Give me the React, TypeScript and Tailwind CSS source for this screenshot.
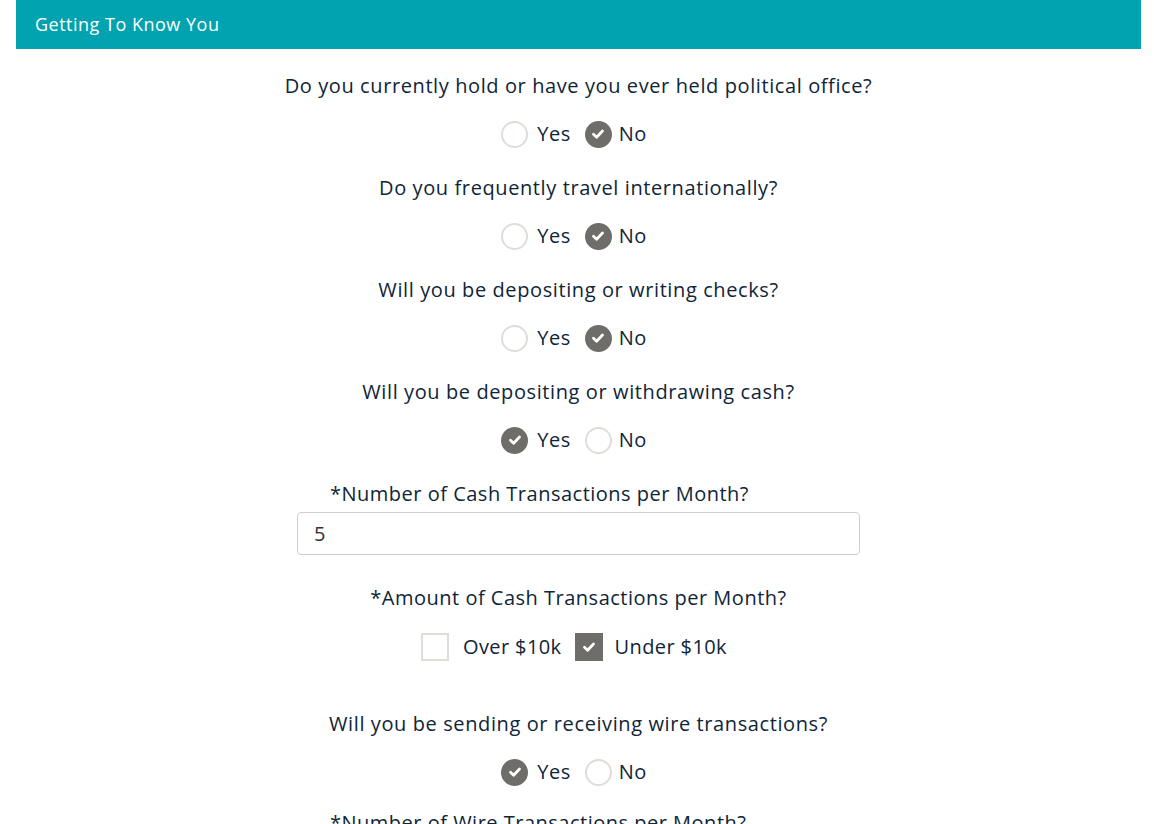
import React from "react";

const font = { fontFamily: '"Open Sans", "Noto Sans", sans-serif' };

function Check() {
  return (
    <svg width="16" height="16" viewBox="0 0 16 16" fill="none">
      <path d="M3.5 8.3 L6.6 11.2 L12.5 5" stroke="white" strokeWidth="2.8" strokeLinecap="round" strokeLinejoin="round" />
    </svg>
  );
}

function Radio({ checked }: { checked: boolean }) {
  return checked ? (
    <span className="flex h-[27px] w-[27px] items-center justify-center rounded-full bg-[#6f6d69]">
      <Check />
    </span>
  ) : (
    <span className="block h-[27px] w-[27px] rounded-full border-2 border-[#e0ddd8] bg-white" />
  );
}

function Box({ checked }: { checked: boolean }) {
  return checked ? (
    <span className="flex h-[28px] w-[28px] items-center justify-center bg-[#6f6d69]">
      <Check />
    </span>
  ) : (
    <span className="block h-[28px] w-[28px] border-2 border-[#e0ddd8] bg-white" />
  );
}

function YesNo({ yes }: { yes: boolean }) {
  return (
    <div className="flex h-[26px] items-center justify-center pr-[9px] text-[20px] tracking-[0.5px] text-[#0f2538]">
      <Radio checked={yes} />
      <span className="ml-[9px] mr-[14px]">Yes</span>
      <Radio checked={!yes} />
      <span className="ml-[7px]">No</span>
    </div>
  );
}

function Question({ text, yes }: { text: string; yes: boolean }) {
  return (
    <div className="flex flex-col">
      <div className="h-[24px] text-center text-[20px] font-medium leading-[24px] tracking-[0.6px] text-[#0f2538]">
        {text}
      </div>
      <div className="mt-[23px]">
        <YesNo yes={yes} />
      </div>
    </div>
  );
}

function NumberField({ label, value }: { label: string; value: string }) {
  return (
    <div className="mx-auto flex w-[563px] flex-col">
      <div className="h-[24px] pl-[33px] text-[20px] leading-[24px] tracking-[0.5px] text-[#0f2538]">{label}</div>
      <input
        readOnly
        value={value}
        className="mt-[6px] h-[43px] w-full rounded-[4px] border border-[#cfcfcf] px-[16px] text-[20px] text-[#333] outline-none"
        style={font}
      />
    </div>
  );
}

export default function App() {
  return (
    <div className="h-[824px] w-full overflow-hidden bg-white" style={font}>
      <div className="ml-4 mr-[13px] flex flex-col">
        <div className="flex h-[49px] items-center bg-[#00a3af] pl-[19px] text-[18px] font-medium tracking-[0.5px] text-white">
          Getting To Know You
        </div>
        <div className="flex flex-col pt-[25px]">
          <Question text="Do you currently hold or have you ever held political office?" yes={false} />
          <div className="mt-[29px]">
            <Question text="Do you frequently travel internationally?" yes={false} />
          </div>
          <div className="mt-[29px]">
            <Question text="Will you be depositing or writing checks?" yes={false} />
          </div>
          <div className="mt-[29px]">
            <Question text="Will you be depositing or withdrawing cash?" yes={true} />
          </div>
          <div className="mt-[29px]">
            <NumberField label="*Number of Cash Transactions per Month?" value="5" />
          </div>
          <div className="mt-[31px] h-[24px] text-center text-[20px] leading-[24px] tracking-[0.5px] text-[#0f2538]">
            *Amount of Cash Transactions per Month?
          </div>
          <div className="mt-[23px] flex h-[28px] items-center justify-center pr-[9px] text-[20px] tracking-[0.4px] text-[#0f2538]">
            <Box checked={false} />
            <span className="ml-[14px] mr-[13px]">Over $10k</span>
            <Box checked={true} />
            <span className="ml-[12px]">Under $10k</span>
          </div>
          <div className="mt-[51px]">
            <Question text="Will you be sending or receiving wire transactions?" yes={true} />
          </div>
          <div className="mt-[26px]">
            <NumberField label="*Number of Wire Transactions per Month?" value="" />
          </div>
        </div>
      </div>
    </div>
  );
}
